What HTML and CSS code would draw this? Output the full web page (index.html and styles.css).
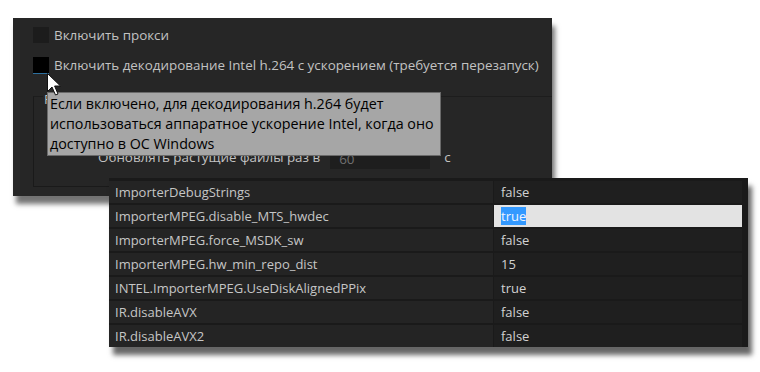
FILE: index.html
```html
<!DOCTYPE html>
<html lang="ru">
<head>
<meta charset="utf-8">
<link rel="stylesheet" href="styles.css">
</head>
<body>
<div class="stage">
  <div class="panel">
    <label class="check-row"><span class="box"></span><span>Включить прокси</span></label>
    <label class="check-row"><span class="box box-focus"></span><span>Включить декодирование Intel h.264 с ускорением (требуется перезапуск)</span></label>
    <div class="group">
      <div class="legend">Растущие файлы</div>
      <div class="refresh-row">
        <span class="refresh-label">Обновлять растущие файлы раз в</span>
        <span class="field">60</span>
        <span class="unit">с</span>
      </div>
    </div>
  </div>

  <div class="table">
    <div class="row"><div class="key">ImporterDebugStrings</div><div class="val">false</div></div>
    <div class="row"><div class="key">ImporterMPEG.disable_MTS_hwdec</div><div class="val val-edit"><span class="sel">true</span></div></div>
    <div class="row"><div class="key">ImporterMPEG.force_MSDK_sw</div><div class="val">false</div></div>
    <div class="row"><div class="key">ImporterMPEG.hw_min_repo_dist</div><div class="val">15</div></div>
    <div class="row"><div class="key">INTEL.ImporterMPEG.UseDiskAlignedPPix</div><div class="val">true</div></div>
    <div class="row"><div class="key">IR.disableAVX</div><div class="val">false</div></div>
    <div class="row"><div class="key">IR.disableAVX2</div><div class="val">false</div></div>
  </div>

  <div class="tooltip">Если включено, для декодирования h.264 будет<br>использоваться аппаратное ускорение Intel, когда оно<br>доступно в ОС Windows</div>

  <svg class="cursor" width="16" height="25" viewBox="0 0 16 25">
    <path d="M1.5 1.5 L1.5 19.5 L6 15 L9.5 23 L12 22 L8.6 14 L14.5 14 Z" fill="#fff" stroke="#111" stroke-width="1"/>
  </svg>
</div>
</body>
</html>
```

FILE: styles.css
```css
html, body {
  margin: 0;
  padding: 0;
  background: #ffffff;
}
body {
  font-family: "Open Sans", "Noto Sans", sans-serif;
  font-size: 13px;
}
.stage {
  position: relative;
  width: 760px;
  height: 372px;
  overflow: hidden;
  padding: 18px 0 0 13px;
  box-sizing: border-box;
}
.panel {
  width: 539px;
  height: 178px;
  background: #262626;
  box-shadow: 3px 8px 5px rgba(0, 0, 0, 0.55);
  padding: 9px 0 0 20px;
  box-sizing: border-box;
  color: #c2c2c2;
  font-size: 13.4px;
  display: flex;
  flex-direction: column;
}
.check-row {
  display: flex;
  align-items: center;
  gap: 5px;
  height: 16px;
  margin-bottom: 14px;
  white-space: nowrap;
}
.box {
  width: 16px;
  height: 16px;
  background: #1c1c1c;
  flex: none;
}
.box-focus {
  background: #000;
  box-shadow: 0 1px 0 #2c6f9e;
}
.group {
  margin-top: 9px;
  height: 91px;
  flex: none;
  border-top: 1px solid #1d1d1d;
  border-left: 1px solid #1a1a1a;
  border-bottom: 1px solid #1a1a1a;
  box-sizing: border-box;
  padding-left: 64px;
}
.legend {
  margin: -7px 0 0 -55px;
  width: max-content;
  background: #262626;
  padding: 0 1px;
  line-height: 18px;
  height: 18px;
}
.refresh-row {
  display: flex;
  align-items: flex-start;
  margin-top: 41px;
  height: 20px;
  white-space: nowrap;
}
.refresh-label {
  line-height: 16px;
}
.field {
  margin-left: 10px;
  margin-top: 2px;
  width: 100px;
  height: 18px;
  background: #1e1e1e;
  color: #707070;
  padding-left: 9px;
  box-sizing: border-box;
  line-height: 16px;
}
.unit {
  margin-left: 14px;
  line-height: 16px;
}
.table {
  position: absolute;
  left: 109px;
  top: 178px;
  width: 639px;
  height: 169px;
  background: #1a1a1a;
  box-shadow: 4px 8px 5px rgba(0, 0, 0, 0.6);
  padding: 3px 6px 0 0;
  box-sizing: border-box;
  display: flex;
  flex-direction: column;
  gap: 2px;
}
.row {
  display: flex;
  height: 22px;
  gap: 1px;
}
.key {
  width: 384px;
  background: #242424;
  color: #c6c6c6;
  padding-left: 6px;
  line-height: 22px;
  box-sizing: border-box;
  white-space: nowrap;
}
.val {
  flex: 1;
  background: #1f1f1f;
  color: #d2d2d2;
  padding-left: 7px;
  line-height: 22px;
}
.val-edit {
  background: #e3e3e3;
}
.sel {
  background: #3399ff;
  color: #eef4ff;
  display: inline-block;
  line-height: 18px;
}
.tooltip {
  position: absolute;
  left: 47px;
  top: 92px;
  width: 394px;
  height: 64px;
  box-sizing: border-box;
  background: #a6a6a6;
  border: 1px solid #6a6a6a;
  color: #000;
  font-size: 14.3px;
  line-height: 20px;
  padding: 1px 0 0 2px;
  white-space: nowrap;
}
.cursor {
  position: absolute;
  left: 46px;
  top: 72px;
}
```
